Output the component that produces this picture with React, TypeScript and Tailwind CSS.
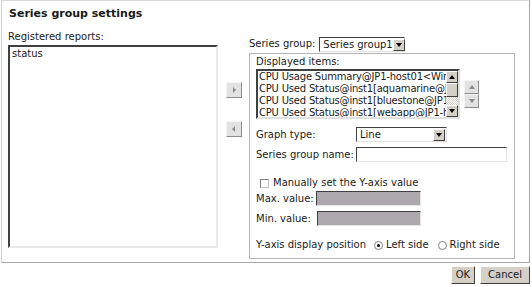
import React from "react";

const Tri = ({ dir, color }: { dir: "up" | "down" | "left" | "right"; color: string }) => {
  const pts = {
    up: "1,6 4,2 7,6",
    down: "1,2 4,6 7,2",
    left: "5,1 2,4 5,7",
    right: "3,1 6,4 3,7",
  }[dir];
  return (
    <svg width="8" height="8" viewBox="0 0 8 8">
      <polygon points={pts} fill={color} />
    </svg>
  );
};

const SmallBtn = ({ dir }: { dir: "left" | "right" }) => (
  <div className="w-[16px] h-[16px] bg-[#e2e2e2] border border-t-[#f4f4f4] border-l-[#f4f4f4] border-r-[#8c8c8c] border-b-[#8c8c8c] flex items-center justify-center">
    <Tri dir={dir} color="#8a8a8a" />
  </div>
);

const DropBtn = () => (
  <div className="shrink-0 w-[12px] h-[12px] bg-[#d4d0c8] border border-t-white border-l-white border-r-[#404040] border-b-[#404040] flex items-center justify-center">
    <Tri dir="down" color="#000" />
  </div>
);

const Select = ({ value, width }: { value: string; width: string }) => (
  <div className={`${width} h-[15px] bg-white border border-t-[#404040] border-l-[#404040] border-r-[#e0e0e0] border-b-[#e0e0e0] flex items-center justify-between pl-[3px] pr-px`}>
    <span className="whitespace-nowrap">{value}</span>
    <DropBtn />
  </div>
);

const TextBox = ({ width, disabled }: { width: string; disabled?: boolean }) => (
  <div
    className={`${width} h-[15px] border border-t-[#404040] border-l-[#404040] border-r-[#e4e4e4] border-b-[#e4e4e4] ${
      disabled ? "bg-[#aca8ac]" : "bg-white"
    }`}
  />
);

const items = [
  "CPU Usage Summary@JP1-host01<Windows>",
  "CPU Used Status@inst1[aquamarine@JP1-host01]",
  "CPU Used Status@inst1[bluestone@JP1-host01]",
  "CPU Used Status@inst1[webapp@JP1-host01]",
];

export default function App() {
  return (
    <div className="w-[532px] h-[287px] bg-white text-[10px] text-[#1a1a1a] font-['DejaVu_Sans',sans-serif] leading-[12px]">
      <div className="ml-px w-[529px] h-[263px] border border-[#a6a6a6] border-t-[#d8d8d8] border-l-[#d0d0d0]">
        <div className="h-[26px] pl-[7px] pt-[7px] text-[11px] font-bold">Series group settings</div>

        <div className="flex pl-[6px]">
          {/* Registered reports */}
          <div className="w-[210px]">
            <div className="h-[18px] flex items-end pb-[2px]">Registered reports:</div>
            <div className="h-[203px] bg-white border-2 border-t-[#404040] border-l-[#404040] border-r-[#e8e8e8] border-b-[#e8e8e8] pl-[2px] pt-px">
              status
            </div>
          </div>

          {/* Move buttons */}
          <div className="w-[31px] flex flex-col items-center pt-[55px] gap-[23px]">
            <SmallBtn dir="right" />
            <SmallBtn dir="left" />
          </div>

          {/* Series group */}
          <div className="w-[266px]">
            <div className="h-[26px] pt-[10px] flex items-start gap-[4px]">
              <span className="pt-px whitespace-nowrap">Series group:</span>
              <Select value="Series group1" width="w-[86px]" />
            </div>

            <div className="h-[206px] border border-[#b4b4b4] pl-[6px]">
              <div className="h-[15px] flex items-end pb-px">Displayed items:</div>

              <div className="flex">
                <div className="w-[204px] h-[50px] bg-white border-2 border-t-[#404040] border-l-[#404040] border-r-[#e0e0e0] border-b-[#e0e0e0] flex">
                  <div className="flex-1 overflow-hidden pl-px tracking-[-0.2px]">
                    {items.map((t) => (
                      <div key={t} className="h-[12px] whitespace-nowrap">
                        {t}
                      </div>
                    ))}
                  </div>
                  {/* scrollbar */}
                  <div className="w-[12px] shrink-0 flex flex-col bg-[repeating-conic-gradient(#d4d0c8_0_25%,#ffffff_0_50%)] bg-[length:2px_2px]">
                    <div className="h-[12px] bg-[#d4d0c8] border border-t-white border-l-white border-r-[#404040] border-b-[#404040] flex items-center justify-center">
                      <Tri dir="up" color="#000" />
                    </div>
                    <div className="h-[14px] bg-[#d4d0c8] border border-t-white border-l-white border-r-[#404040] border-b-[#404040]" />
                    <div className="flex-1" />
                    <div className="h-[12px] bg-[#d4d0c8] border border-t-white border-l-white border-r-[#404040] border-b-[#404040] flex items-center justify-center">
                      <Tri dir="down" color="#000" />
                    </div>
                  </div>
                </div>

                <div className="ml-[4px] mt-[11px] flex flex-col">
                  <div className="w-[15px] h-[14px] bg-[#e2e2e2] border border-t-[#f4f4f4] border-l-[#f4f4f4] border-r-[#8c8c8c] border-b-[#8c8c8c] flex items-center justify-center">
                    <Tri dir="up" color="#8a8a8a" />
                  </div>
                  <div className="w-[15px] h-[14px] bg-[#e2e2e2] border border-t-[#f4f4f4] border-l-[#f4f4f4] border-r-[#8c8c8c] border-b-[#8c8c8c] flex items-center justify-center">
                    <Tri dir="down" color="#8a8a8a" />
                  </div>
                </div>
              </div>

              <div className="mt-[8px] flex items-center">
                <span className="w-[100px]">Graph type:</span>
                <Select value="Line" width="w-[91px]" />
              </div>

              <div className="mt-[5px] flex items-center">
                <span className="w-[100px]">Series group name:</span>
                <TextBox width="w-[151px]" />
              </div>

              <div className="mt-[15px] flex items-center gap-[4px] pl-[4px] h-[12px]">
                <div className="w-[9px] h-[9px] border border-[#808080] border-r-[#c0c0c0] border-b-[#c0c0c0] bg-white" />
                <span>Manually set the Y-axis value</span>
              </div>

              <div className="mt-[2px] flex items-center">
                <span className="w-[60px]">Max. value:</span>
                <TextBox width="w-[105px]" disabled />
              </div>

              <div className="mt-[5px] flex items-center">
                <span className="w-[61px]">Min. value:</span>
                <TextBox width="w-[104px]" disabled />
              </div>

              <div className="mt-[13px] flex items-center h-[12px]">
                <span>Y-axis display position</span>
                <div className="ml-[8px] w-[9px] h-[9px] rounded-full border border-[#808080] bg-white flex items-center justify-center">
                  <div className="w-[3px] h-[3px] rounded-full bg-black" />
                </div>
                <span className="ml-[3px]">Left side</span>
                <div className="ml-[9px] w-[9px] h-[9px] rounded-full border border-[#808080] bg-white" />
                <span className="ml-[3px]">Right side</span>
              </div>
            </div>
          </div>
        </div>
      </div>

      <div className="flex justify-end gap-[5px] pr-[2px] pt-[3px]">
        <div className="h-[18px] px-[4px] bg-[#d4d0c8] border border-t-white border-l-white border-r-[#404040] border-b-[#404040] flex items-center">
          OK
        </div>
        <div className="h-[18px] px-[7px] bg-[#d4d0c8] border border-t-white border-l-white border-r-[#404040] border-b-[#404040] flex items-center">
          Cancel
        </div>
      </div>
    </div>
  );
}
